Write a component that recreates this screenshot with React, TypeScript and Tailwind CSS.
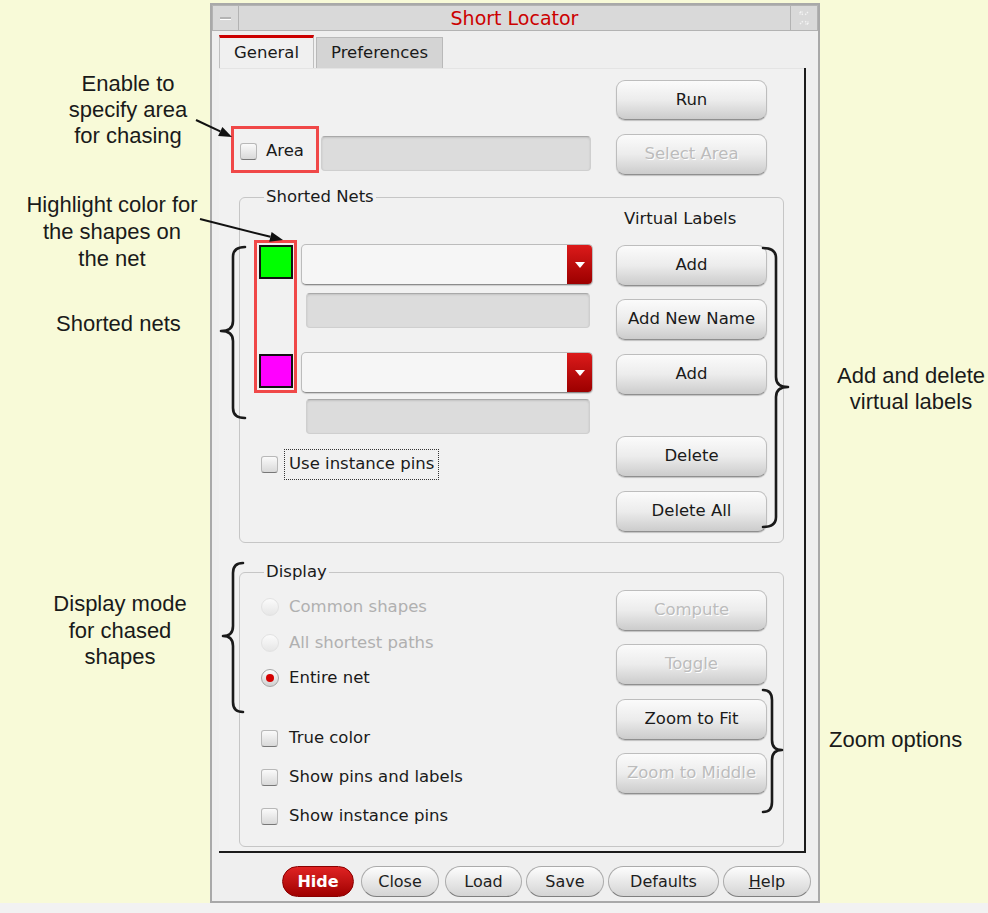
import React from "react";

const UI = "font-['DejaVu_Sans','Noto_Sans',sans-serif]";
const ANN = "font-['Liberation_Sans',Arial,sans-serif]";

function Btn({ label, disabled, h = "h-[41px]" }: { label: string; disabled?: boolean; h?: string }) {
  return (
    <div
      className={`${h} w-[151px] rounded-[9px] border border-[#bdbdbd] border-b-[#8f8f8f] bg-linear-to-b from-[#fbfbfb] via-[#ececec] to-[#cccccc] shadow-[0_1px_1px_rgba(0,0,0,0.2)] flex items-center justify-center text-[16.5px] ${
        disabled ? "text-[#bcbcbc] [text-shadow:1px_1px_0_#ffffff]" : "text-[#1a1a1a]"
      }`}
    >
      {label}
    </div>
  );
}

function Check() {
  return (
    <div className="w-[17px] h-[17px] shrink-0 rounded-[3px] border border-[#b8b8b8] border-b-[#777777] bg-linear-to-b from-[#fafafa] to-[#d9d9d9]" />
  );
}

function Radio({ on, disabled }: { on?: boolean; disabled?: boolean }) {
  return (
    <div
      className={`w-[18px] h-[18px] shrink-0 rounded-full border flex items-center justify-center ${
        disabled
          ? "border-[#e2e2e2] bg-linear-to-b from-[#fbfbfb] to-[#e6e6e6]"
          : "border-[#a6a6a6] bg-linear-to-b from-[#fdfdfd] to-[#cfcfcf]"
      }`}
    >
      {on && <div className="w-[8px] h-[8px] rounded-full bg-[#d40000]" />}
    </div>
  );
}

function Combo() {
  return (
    <div className="w-[292px] h-[41px] rounded-[5px] border border-[#bcbcbc] border-b-[#8c8c8c] bg-[#f6f6f6] flex justify-end overflow-hidden shadow-[0_1px_1px_rgba(0,0,0,0.15)]">
      <div className="w-[25px] h-full bg-linear-to-b from-[#dc1a1a] to-[#9c0000] flex items-center justify-center">
        <div className="w-0 h-0 border-l-[5px] border-r-[5px] border-t-[6px] border-l-transparent border-r-transparent border-t-white" />
      </div>
    </div>
  );
}

function Field({ w }: { w: string }) {
  return (
    <div className={`${w} h-[35px] rounded-[4px] bg-[#dcdcdc] border border-[#cfcfcf] border-t-[#a9a9a9] shadow-[inset_0_1px_2px_rgba(0,0,0,0.12)]`} />
  );
}

function PillBtn({ children, w, ml, red }: { children: React.ReactNode; w: string; ml: string; red?: boolean }) {
  return (
    <div
      className={`${w} ${ml} h-[31px] rounded-full border flex items-center justify-center text-[16px] ${
        red
          ? "border-[#8a0000] bg-linear-to-b from-[#e02222] to-[#a00000] text-white font-bold"
          : "border-[#ababab] border-b-[#7f7f7f] bg-linear-to-b from-[#fdfdfd] to-[#d4d4d4] text-[#1e1e1e]"
      }`}
    >
      {children}
    </div>
  );
}

function Brace({ x0, xm, xt, y0, y1, ym }: { x0: number; xm: number; xt: number; y0: number; y1: number; ym: number }) {
  const r = 10;
  const d = `M ${x0} ${y0} Q ${xm} ${y0} ${xm} ${y0 + r} L ${xm} ${ym - r} Q ${xm} ${ym} ${xt} ${ym} Q ${xm} ${ym} ${xm} ${ym + r} L ${xm} ${y1 - r} Q ${xm} ${y1} ${x0} ${y1}`;
  return <path d={d} fill="none" stroke="#1a1a1a" strokeWidth={2.6} strokeLinecap="round" strokeLinejoin="round" />;
}

function Arrow({ x1, y1, x2, y2 }: { x1: number; y1: number; x2: number; y2: number }) {
  const a = Math.atan2(y2 - y1, x2 - x1);
  const L = 13;
  const W = 5;
  const bx = x2 - L * Math.cos(a);
  const by = y2 - L * Math.sin(a);
  const px = -Math.sin(a) * W;
  const py = Math.cos(a) * W;
  return (
    <g>
      <line x1={x1} y1={y1} x2={bx} y2={by} stroke="#111" strokeWidth={2} />
      <polygon points={`${x2},${y2} ${bx + px},${by + py} ${bx - px},${by - py}`} fill="#111" />
    </g>
  );
}

export default function App() {
  return (
    <div className={`relative w-[988px] h-[913px] overflow-hidden bg-[#f2f2f2] ${UI}`}>
      <div className="h-[903px] flex bg-[#f8fad8]">
        <div className="w-[210px] shrink-0" />
        {/* Dialog */}
        <div className="mt-[3px] w-[610px] h-[900px] border-2 border-[#a9a9a9] bg-[#efefef] flex flex-col">
          {/* Title bar */}
          <div className="h-[26px] flex border border-[#b3b3b3] bg-[#d9d9d9]">
            <div className="w-[26px] border-r border-[#b3b3b3] flex items-center justify-center">
              <div className="w-[11px] h-[3px] bg-[#b4b4b4] border-b border-white" />
            </div>
            <div className="flex-1 flex items-center justify-center text-[19px] text-[#cc0000] leading-none">Short Locator</div>
            <div className="w-[27px] border-l border-[#b3b3b3] flex items-center justify-center">
              <svg width="14" height="16" viewBox="0 0 14 16">
                <path d="M3 2 L6 5 M3 2 L3 5 M3 2 L6 2 M11 14 L8 11 M11 14 L11 11 M11 14 L8 14 M11 2 L8 5 M3 14 L6 11" stroke="#f4f4f4" strokeWidth="1.3" strokeDasharray="1.5 1" fill="none" />
              </svg>
            </div>
          </div>
          {/* Tabs */}
          <div className="mt-[4px] ml-[7px] h-[33px] flex items-end">
            <div className="w-[95px] h-[33px] border-t-[3px] border-x border-[#c0c0c0] border-t-[#cc0000] bg-[#f0f0f0] flex items-center justify-center text-[16.5px] text-[#1a1a1a]">
              General
            </div>
            <div className="ml-[2px] w-[127px] h-[31px] border border-b-0 border-[#b9b9b9] bg-[#d4d4d4] flex items-center justify-center text-[16.5px] text-[#1a1a1a]">
              Preferences
            </div>
          </div>
          {/* Panel: dark right/bottom edge via wrapper */}
          <div className="ml-[7px] w-[587px] h-[785px] bg-[#1c1c1c] pr-[2px] pb-[2px]">
            <div className="h-full border-t border-[#e4e4e4] bg-[#f1f1f1] text-[16.5px] text-[#1a1a1a]">
              {/* Top section */}
              <div className="ml-[12px] flex items-start">
                <div className="mt-[57px] flex items-start">
                  <div className="w-[88px] h-[47px] border-[3px] border-[#f04848] flex items-center pl-[6px] pt-[4px]">
                    <Check />
                    <span className="ml-[9px] leading-none">Area</span>
                  </div>
                  <div className="ml-[2px] mt-[10px]">
                    <Field w="w-[270px]" />
                  </div>
                </div>
                <div className="ml-[25px] mt-[11px] flex flex-col">
                  <Btn label="Run" h="h-[40px]" />
                  <div className="mt-[14px]">
                    <Btn label="Select Area" disabled />
                  </div>
                </div>
              </div>

              {/* Shorted Nets */}
              <fieldset className="ml-[20px] mt-[12px] w-[545px] h-[356px] border border-[#c6c6c6] rounded-[6px]">
                <legend className="ml-[24px] px-[2px] leading-[20px]">Shorted Nets</legend>
                <div className="flex">
                  <div className="w-[376px] pl-[14px]">
                    <div className="mt-[33px] flex items-start">
                      <div className="w-[43px] h-[153px] border-[3px] border-[#f04848] p-[2px] flex flex-col justify-between">
                        <div className="w-[34px] h-[34px] bg-[#00ff00] border-2 border-[#111]" />
                        <div className="w-[34px] h-[34px] bg-[#ff00ff] border-2 border-[#111]" />
                      </div>
                      <div className="ml-[4px] mt-[4px] flex flex-col">
                        <Combo />
                        <div className="ml-[5px] mt-[8px]">
                          <Field w="w-[284px]" />
                        </div>
                        <div className="mt-[24px]">
                          <Combo />
                        </div>
                        <div className="ml-[5px] mt-[6px]">
                          <Field w="w-[284px]" />
                        </div>
                      </div>
                    </div>
                    <div className="mt-[15px] ml-[7px] h-[31px] flex items-center">
                      <Check />
                      <div className="ml-[6px] h-[31px] px-[4px] border border-dotted border-[#333] flex items-center leading-none">
                        Use instance pins
                      </div>
                    </div>
                  </div>
                  <div className="w-[151px] flex flex-col">
                    <div className="mt-[2px] h-[20px] leading-[20px] pl-[8px]">Virtual Labels</div>
                    <div className="mt-[16px]"><Btn label="Add" /></div>
                    <div className="mt-[13px]"><Btn label="Add New Name" /></div>
                    <div className="mt-[14px]"><Btn label="Add" /></div>
                    <div className="mt-[41px]"><Btn label="Delete" /></div>
                    <div className="mt-[14px]"><Btn label="Delete All" /></div>
                  </div>
                </div>
              </fieldset>

              {/* Display */}
              <fieldset className="ml-[20px] mt-[19px] w-[545px] h-[285px] border border-[#c6c6c6] rounded-[6px]">
                <legend className="ml-[24px] px-[2px] leading-[20px]">Display</legend>
                <div className="flex">
                  <div className="w-[376px] pl-[21px] flex flex-col">
                    <div className="mt-[13px] h-[24px] flex items-center">
                      <Radio disabled />
                      <span className="ml-[10px] text-[#b0b0b0]">Common shapes</span>
                    </div>
                    <div className="mt-[12px] h-[24px] flex items-center">
                      <Radio disabled />
                      <span className="ml-[10px] text-[#b0b0b0]">All shortest paths</span>
                    </div>
                    <div className="mt-[11px] h-[24px] flex items-center">
                      <Radio on />
                      <span className="ml-[10px]">Entire net</span>
                    </div>
                    <div className="mt-[36px] h-[24px] flex items-center">
                      <Check />
                      <span className="ml-[11px]">True color</span>
                    </div>
                    <div className="mt-[15px] h-[24px] flex items-center">
                      <Check />
                      <span className="ml-[11px]">Show pins and labels</span>
                    </div>
                    <div className="mt-[15px] h-[24px] flex items-center">
                      <Check />
                      <span className="ml-[11px]">Show instance pins</span>
                    </div>
                  </div>
                  <div className="w-[151px] flex flex-col">
                    <div className="mt-[8px]"><Btn label="Compute" disabled /></div>
                    <div className="mt-[13px]"><Btn label="Toggle" disabled /></div>
                    <div className="mt-[14px]"><Btn label="Zoom to Fit" /></div>
                    <div className="mt-[13px]"><Btn label="Zoom to Middle" disabled /></div>
                  </div>
                </div>
              </fieldset>
            </div>
          </div>
          {/* Bottom buttons */}
          <div className="mt-[13px] pr-[7px] flex justify-end">
            <PillBtn w="w-[72px]" ml="ml-0" red>Hide</PillBtn>
            <PillBtn w="w-[78px]" ml="ml-[7px]">Close</PillBtn>
            <PillBtn w="w-[77px]" ml="ml-[6px]">Load</PillBtn>
            <PillBtn w="w-[78px]" ml="ml-[4px]">Save</PillBtn>
            <PillBtn w="w-[111px]" ml="ml-[4px]">Defaults</PillBtn>
            <PillBtn w="w-[88px]" ml="ml-[4px]">
              <span><span className="underline">H</span>elp</span>
            </PillBtn>
          </div>
        </div>
      </div>

      {/* Annotation texts */}
      <div className={`absolute left-[48px] top-[71px] w-[160px] text-center text-[22px] leading-[26px] text-[#1a1a1a] ${ANN}`}>
        Enable to
        <br />
        specify area
        <br />
        for chasing
      </div>
      <div className={`absolute left-[12px] top-[191px] w-[200px] text-center text-[22px] leading-[27px] text-[#1a1a1a] ${ANN}`}>
        Highlight color for
        <br />
        the shapes on
        <br />
        the net
      </div>
      <div className={`absolute left-[56px] top-[311px] text-[22px] leading-[26px] text-[#1a1a1a] ${ANN}`}>Shorted nets</div>
      <div className={`absolute left-[40px] top-[591px] w-[160px] text-center text-[22px] leading-[26.5px] text-[#1a1a1a] ${ANN}`}>
        Display mode
        <br />
        for chased
        <br />
        shapes
      </div>
      <div className={`absolute left-[831px] top-[363px] w-[160px] text-center text-[22px] leading-[26px] text-[#1a1a1a] ${ANN}`}>
        Add and delete
        <br />
        virtual labels
      </div>
      <div className={`absolute left-[829px] top-[727px] text-[22px] leading-[26px] text-[#1a1a1a] ${ANN}`}>Zoom options</div>

      {/* Braces and arrows */}
      <svg className="absolute left-0 top-0 pointer-events-none" width="988" height="913">
        <Brace x0={245} xm={233} xt={221} y0={247} y1={418} ym={331} />
        <Brace x0={243} xm={233} xt={223} y0={563} y1={712} ym={636} />
        <Brace x0={763} xm={776} xt={788} y0={248} y1={527} ym={387} />
        <Brace x0={763} xm={772} xt={782} y0={690} y1={812} ym={750} />
        <Arrow x1={196} y1={120} x2={232} y2={137} />
        <Arrow x1={200} y1={219} x2={283} y2={240} />
      </svg>
    </div>
  );
}
